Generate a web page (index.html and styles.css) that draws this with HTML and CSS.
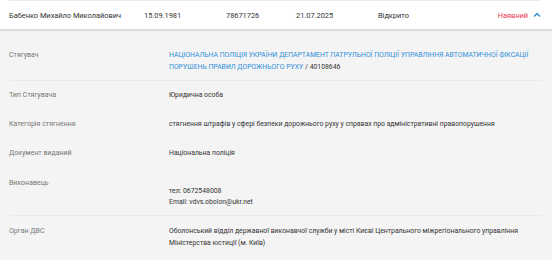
FILE: index.html
```html
<!DOCTYPE html>
<html lang="uk">
<head>
<meta charset="utf-8">
<link rel="stylesheet" href="styles.css">
</head>
<body>
<div class="card">
  <div class="head">
    <div class="head-row">
      <span class="c-name">Бабенко Михайло Миколайович</span>
      <span class="c-dob">15.09.1981</span>
      <span class="c-id">78671726</span>
      <span class="c-date">21.07.2025</span>
      <span class="c-status">Відкрито</span>
      <span class="present">Наявний</span>
      <svg class="chev" width="8" height="6" viewBox="0 0 8 6"><path d="M1 4.5 L4 1.5 L7 4.5" fill="none" stroke="#2f8fd8" stroke-width="1.3"/></svg>
    </div>
  </div>
  <div class="details">
    <div class="row sep first">
      <div class="label">Стягувач</div>
      <div class="value"><span class="link">НАЦІОНАЛЬНА ПОЛІЦІЯ УКРАЇНИ ДЕПАРТАМЕНТ ПАТРУЛЬНОЇ ПОЛІЦІЇ УПРАВЛІННЯ АВТОМАТИЧНОЇ ФІКСАЦІЇ<br>ПОРУШЕНЬ ПРАВИЛ ДОРОЖНЬОГО РУХУ</span> / 40108646</div>
    </div>
    <div class="row second">
      <div class="label">Тип Стягувача</div>
      <div class="value">Юридична особа</div>
    </div>
    <div class="row">
      <div class="label">Категорія стягнення</div>
      <div class="value">стягнення штрафів у сфері безпеки дорожнього руху у справах про адміністративні правопорушення</div>
    </div>
    <div class="row fourth">
      <div class="label">Документ виданий</div>
      <div class="value">Національна поліція</div>
    </div>
    <div class="row sep fifth">
      <div class="label">Виконавець</div>
      <div class="value contact">тел: 0672548008<br>Email: vdvs.obolon@ukr.net</div>
    </div>
    <div class="row">
      <div class="label">Орган ДВС</div>
      <div class="value">Оболонський відділ державної виконавчої служби у місті Києві Центрального міжрегіонального управління<br>Міністерства юстиції (м. Київ)</div>
    </div>
  </div>
</div>
</body>
</html>
```
FILE: styles.css
```css
html, body {
  margin: 0;
  padding: 0;
  background: #f4f4f4;
}
body {
  font-family: Roboto, "Noto Sans", sans-serif;
  font-size: 7.4px;
  color: #333;
}
.card {
  width: 552px;
  overflow: hidden;
}
.head {
  background: #fff;
  padding: 0 11px 0 9px;
  box-shadow: 0 1px 3px rgba(0,0,0,0.18);
  position: relative;
}
.head-row {
  border-top: 1px solid #ececec;
  height: 28px;
  display: flex;
  align-items: center;
}
.c-name { width: 135px; }
.c-dob { width: 82px; }
.c-id { width: 70px; }
.c-date { width: 82px; }
.c-status { width: 80px; }
.present {
  margin-left: auto;
  color: #e8394f;
}
.chev {
  margin-left: 5px;
  flex: none;
}
.details {
  padding: 10px 9px 0 9px;
  font-size: 7px;
}
.row {
  display: grid;
  grid-template-columns: 160px 1fr;
  padding: 9px 0 8px;
  line-height: 12px;
}
.row.first {
  padding-top: 10px;
  padding-bottom: 7px;
}
.row.second {
  padding-top: 8px;
}
.row.fourth {
  padding-bottom: 9px;
}
.row.fifth {
  padding-bottom: 7px;
}
.row.sep {
  border-bottom: 1px solid #ebebeb;
}
.label {
  color: #777;
}
.value {
  color: #333;
  font-size: 6.85px;
  white-space: nowrap;
}
.link {
  color: #2f8fd8;
}
.contact {
  margin-top: 9px;
  line-height: 11px;
}
```
